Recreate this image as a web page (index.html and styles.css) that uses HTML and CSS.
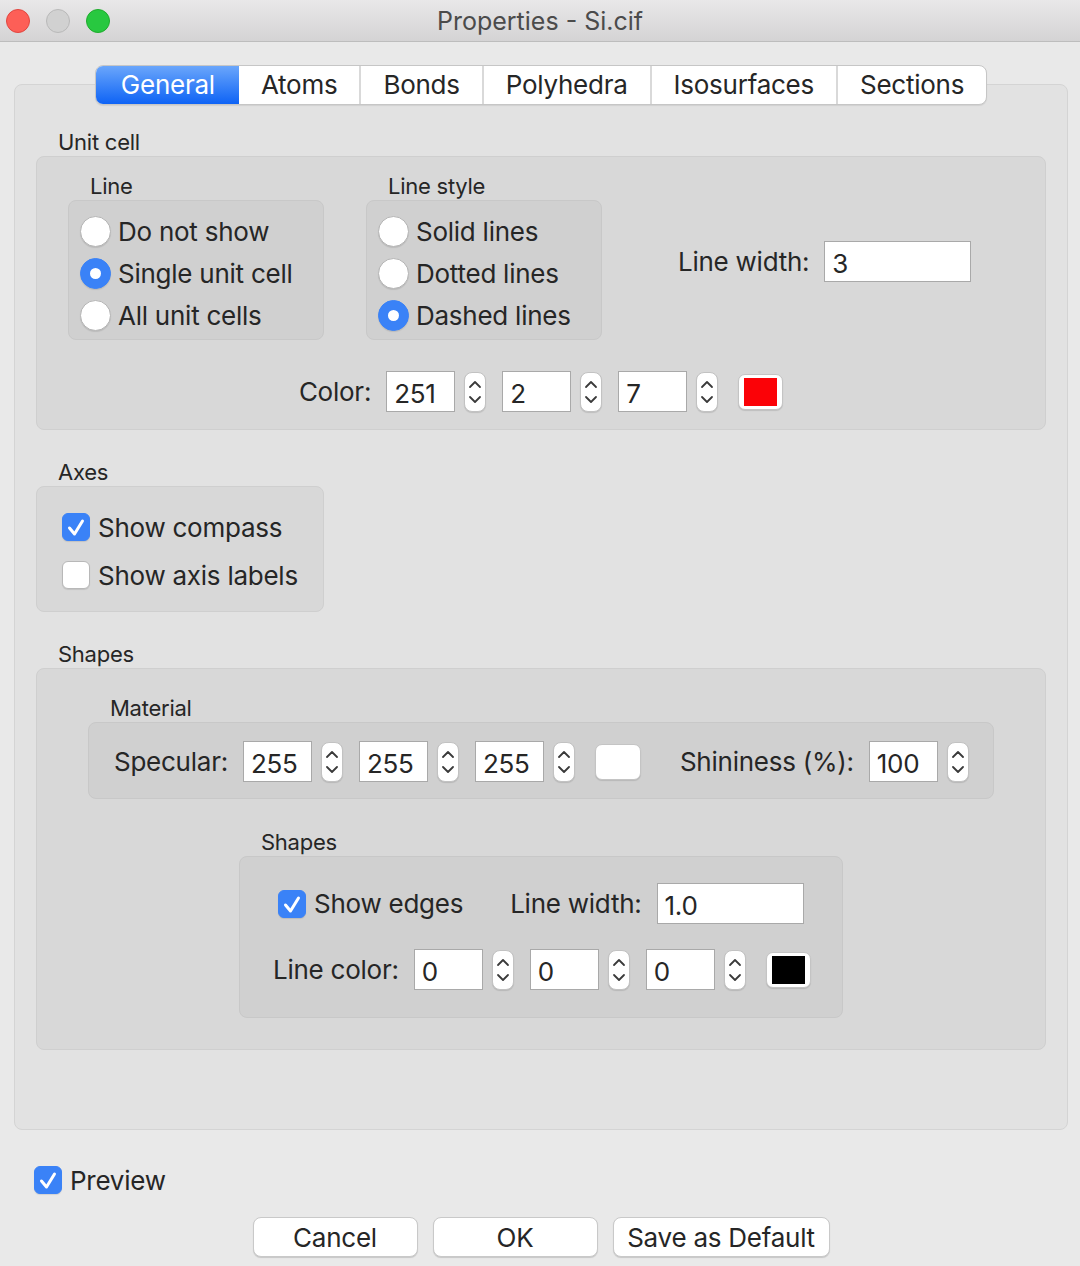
FILE: index.html
```html
<!DOCTYPE html>
<html lang="en">
<head>
    <meta charset="UTF-8">
    <title>Properties - Si.cif</title>
    <link rel="stylesheet" href="styles.css">
</head>
<body>
    <div class="titlebar">
        <div class="lights">
            <span class="light red"></span>
            <span class="light grey"></span>
            <span class="light green"></span>
        </div>
        <div class="title">Properties - Si.cif</div>
        <div class="lights-spacer"></div>
    </div>

    <div class="content">
        <div class="panel">
            <div class="tabs">
                <span class="tab active">General</span>
                <span class="tab">Atoms</span>
                <span class="tab">Bonds</span>
                <span class="tab">Polyhedra</span>
                <span class="tab">Isosurfaces</span>
                <span class="tab">Sections</span>
            </div>

            <!-- Unit cell -->
            <div class="section-label">Unit cell</div>
            <div class="group unit-cell">
                <div class="uc-top">
                    <div class="sub">
                        <div class="sub-label">Line</div>
                        <div class="subbox radios line-box">
                            <div class="radio"><span class="dot"></span>Do not show</div>
                            <div class="radio"><span class="dot on"></span>Single unit cell</div>
                            <div class="radio"><span class="dot"></span>All unit cells</div>
                        </div>
                    </div>
                    <div class="sub">
                        <div class="sub-label">Line style</div>
                        <div class="subbox radios style-box">
                            <div class="radio"><span class="dot"></span>Solid lines</div>
                            <div class="radio"><span class="dot"></span>Dotted lines</div>
                            <div class="radio"><span class="dot on"></span>Dashed lines</div>
                        </div>
                    </div>
                    <div class="field uc-width">
                        <span class="lbl">Line width:</span>
                        <span class="input wide">3</span>
                    </div>
                </div>
                <div class="color-row center">
                    <span class="lbl">Color:</span>
                    <span class="input">251</span>
                    <span class="stepper"><svg width="20" height="38" viewBox="0 0 20 38"><path d="M5 14 L10 9 L15 14 M5 24 L10 29 L15 24"/></svg></span>
                    <span class="input">2</span>
                    <span class="stepper"><svg width="20" height="38" viewBox="0 0 20 38"><path d="M5 14 L10 9 L15 14 M5 24 L10 29 L15 24"/></svg></span>
                    <span class="input">7</span>
                    <span class="stepper"><svg width="20" height="38" viewBox="0 0 20 38"><path d="M5 14 L10 9 L15 14 M5 24 L10 29 L15 24"/></svg></span>
                    <span class="swatch"><span class="chip red-chip"></span></span>
                </div>
            </div>

            <!-- Axes -->
            <div class="section-label">Axes</div>
            <div class="group axes">
                <div class="check-row"><span class="check on"><svg width="28" height="28" viewBox="0 0 28 28"><path d="M7.5 15 L12.5 21 L20.5 8"/></svg></span>Show compass</div>
                <div class="check-row"><span class="check"></span>Show axis labels</div>
            </div>

            <!-- Shapes -->
            <div class="section-label">Shapes</div>
            <div class="group shapes">
                <div class="sub-label">Material</div>
                <div class="subbox material">
                    <span class="lbl">Specular:</span>
                    <span class="input">255</span>
                    <span class="stepper"><svg width="20" height="38" viewBox="0 0 20 38"><path d="M5 14 L10 9 L15 14 M5 24 L10 29 L15 24"/></svg></span>
                    <span class="input">255</span>
                    <span class="stepper"><svg width="20" height="38" viewBox="0 0 20 38"><path d="M5 14 L10 9 L15 14 M5 24 L10 29 L15 24"/></svg></span>
                    <span class="input">255</span>
                    <span class="stepper"><svg width="20" height="38" viewBox="0 0 20 38"><path d="M5 14 L10 9 L15 14 M5 24 L10 29 L15 24"/></svg></span>
                    <span class="swatch white-swatch"></span>
                    <span class="lbl shininess">Shininess (%):</span>
                    <span class="input">100</span>
                    <span class="stepper"><svg width="20" height="38" viewBox="0 0 20 38"><path d="M5 14 L10 9 L15 14 M5 24 L10 29 L15 24"/></svg></span>
                </div>

                <div class="inner-shapes">
                    <div class="sub-label">Shapes</div>
                    <div class="subbox edges">
                        <div class="edges-row first">
                            <div class="check-row"><span class="check on"><svg width="28" height="28" viewBox="0 0 28 28"><path d="M7.5 15 L12.5 21 L20.5 8"/></svg></span>Show edges</div>
                            <span class="lbl edge-width">Line width:</span>
                            <span class="input wide">1.0</span>
                        </div>
                        <div class="edges-row">
                            <span class="lbl">Line color:</span>
                            <span class="input">0</span>
                            <span class="stepper"><svg width="20" height="38" viewBox="0 0 20 38"><path d="M5 14 L10 9 L15 14 M5 24 L10 29 L15 24"/></svg></span>
                            <span class="input">0</span>
                            <span class="stepper"><svg width="20" height="38" viewBox="0 0 20 38"><path d="M5 14 L10 9 L15 14 M5 24 L10 29 L15 24"/></svg></span>
                            <span class="input">0</span>
                            <span class="stepper"><svg width="20" height="38" viewBox="0 0 20 38"><path d="M5 14 L10 9 L15 14 M5 24 L10 29 L15 24"/></svg></span>
                            <span class="swatch"><span class="chip black-chip"></span></span>
                        </div>
                    </div>
                </div>
            </div>
        </div>

        <div class="check-row preview"><span class="check on"><svg width="28" height="28" viewBox="0 0 28 28"><path d="M7.5 15 L12.5 21 L20.5 8"/></svg></span>Preview</div>

        <div class="buttons">
            <button class="btn">Cancel</button>
            <button class="btn">OK</button>
            <button class="btn save">Save as Default</button>
        </div>
    </div>
</body>
</html>
```

FILE: styles.css
```css
body { margin: 0; background: #e9e9e9; font-family: Inter, "Liberation Sans", sans-serif; color: #262626; letter-spacing: -0.25px; width: 1080px; height: 1266px; overflow: hidden; }

/* window chrome */
.titlebar { height: 41px; border-bottom: 1px solid #bdbdbd; background: linear-gradient(#e9e8e9, #d4d3d4); display: flex; align-items: center; }
.lights { width: 120px; display: flex; gap: 16px; padding-left: 6px; box-sizing: border-box; }
.lights-spacer { width: 120px; }
.light { width: 24px; height: 24px; border-radius: 50%; box-sizing: border-box; }
.light.red { background: #fd5f57; border: 1px solid #e1463f; }
.light.grey { background: #d1d1d1; border: 1px solid #b9b9b9; }
.light.green { background: #28c840; border: 1px solid #1fac2d; }
.title { flex: 1; text-align: center; font-size: 25px; color: #4b4b4b; letter-spacing: 0; }

.content { padding: 42px 12px 0 14px; }
.panel { background: #e2e2e2; border: 1px solid #d4d4d4; border-radius: 8px; padding: 0 21px 79px; }

/* tabs */
.tabs { display: flex; width: max-content; margin: -20px auto 0; height: 40px; box-sizing: border-box; border: 1px solid #c6c6c6; border-radius: 8px; background: #fff; overflow: hidden; box-shadow: 0 1px 1px rgba(0,0,0,0.08); }
.tab { font-size: 26px; padding: 0 22px; line-height: 38px; border-left: 2px solid #d9d9d9; }
.tab:first-child { border-left: none; padding: 0 24px 0 25px; }
.tab.active { background: linear-gradient(#6aa6fb, #0e63f5); color: #fff; }
.tab.active + .tab { border-left: none; }

/* groups */
.section-label { font-size: 22px; line-height: 26px; margin: 24px 0 1px 22px; }
.group { background: #d8d8d8; border: 1px solid #cfcfcf; border-radius: 8px; }
.sub-label { font-size: 22px; line-height: 26px; margin: 0 0 1px 22px; }
.subbox { background: #d0d0d0; border: 1px solid #c8c8c8; border-radius: 8px; }

.unit-cell { padding: 16px 31px 17px; }
.unit-cell + .section-label, .axes + .section-label { margin-top: 29px; }
.uc-top { display: flex; align-items: center; }
.line-box { width: 256px; }
.style-box { width: 236px; }
.uc-top .sub + .sub { margin-left: 42px; }
.uc-width { margin-left: 76px; margin-top: 9px; }
.radios { box-sizing: border-box; height: 140px; padding: 9px 0 0 11px; }
.radio { display: flex; align-items: center; height: 42px; font-size: 26px; }
.dot { width: 31px; height: 31px; border-radius: 50%; background: #fff; border: 1px solid #b5b5b5; box-sizing: border-box; margin-right: 7px; position: relative; box-shadow: 0 1px 1px rgba(0,0,0,0.1); }
.dot.on { background: #3a82f7; border-color: #3a82f7; }
.dot.on::after { content: ""; position: absolute; left: 9px; top: 9px; width: 11px; height: 11px; border-radius: 50%; background: #fff; }

/* inputs */
.field { display: flex; align-items: center; }
.lbl { font-size: 26px; }
.input { display: inline-block; width: 69px; height: 41px; box-sizing: border-box; background: #fff; border: 1px solid #a9a9a9; font-size: 26px; line-height: 43px; padding-left: 7px; }
.input.wide { width: 147px; }
.lbl + .input { margin-left: 15px; }
.stepper { display: inline-flex; width: 22px; height: 40px; box-sizing: border-box; background: #fff; border: 1px solid #c2c2c2; border-radius: 8px; margin: 0 16px 0 9px; box-shadow: 0 1px 1px rgba(0,0,0,0.12); }
.stepper svg { fill: none; stroke: #3a3a3a; stroke-width: 1.8; stroke-linecap: round; stroke-linejoin: round; }
.swatch { display: inline-flex; align-items: center; justify-content: center; width: 45px; height: 36px; box-sizing: border-box; background: #fff; border: 1px solid #c4c4c4; border-radius: 7px; margin-left: 4px; box-shadow: 0 1px 1px rgba(0,0,0,0.12); }
.chip { width: 33px; height: 28px; }
.red-chip { background: #fb0207; }
.black-chip { background: #000; }

.color-row { display: flex; align-items: center; margin-top: 31px; }
.center { justify-content: center; }

/* axes */
.axes { width: 288px; box-sizing: border-box; padding: 16px 0 12px 25px; }
.check-row { display: flex; align-items: center; height: 48px; font-size: 26px; }
.check { width: 28px; height: 28px; box-sizing: border-box; border-radius: 6px; background: #fff; border: 1px solid #b8b8b8; margin-right: 8px; box-shadow: 0 1px 1px rgba(0,0,0,0.1); }
.check.on { background: #3a82f7; border-color: #3a82f7; }
.check svg { display: block; margin: -1px; fill: none; stroke: #fff; stroke-width: 3; stroke-linecap: round; stroke-linejoin: round; }

/* shapes */
.shapes { padding: 26px 51px 31px; }
.material { display: flex; align-items: center; height: 77px; box-sizing: border-box; padding: 2px 0 0 25px; }
.material .white-swatch { width: 46px; }
.material .shininess { margin-left: 39px; }
.inner-shapes { width: 604px; margin: 30px auto 0; }
.edges { padding: 26px 0 27px 33px; }
.edges-row { display: flex; align-items: center; height: 41px; }
.edges-row.first { margin-bottom: 25px; }
.edges-row .check-row { margin-left: 5px; }
.edge-width { margin-left: 47px; }

/* footer */
.preview { margin: 26px 0 0 20px; height: 48px; }
.buttons { display: flex; justify-content: center; gap: 15px; margin-top: 13px; }
.btn { width: 165px; height: 40px; background: #fff; border: 1px solid #c9c9c9; border-radius: 8px; font-family: inherit; font-size: 26px; letter-spacing: -0.25px; color: #262626; padding: 0; box-shadow: 0 1px 1px rgba(0,0,0,0.15); }
.btn.save { width: 217px; }
```
